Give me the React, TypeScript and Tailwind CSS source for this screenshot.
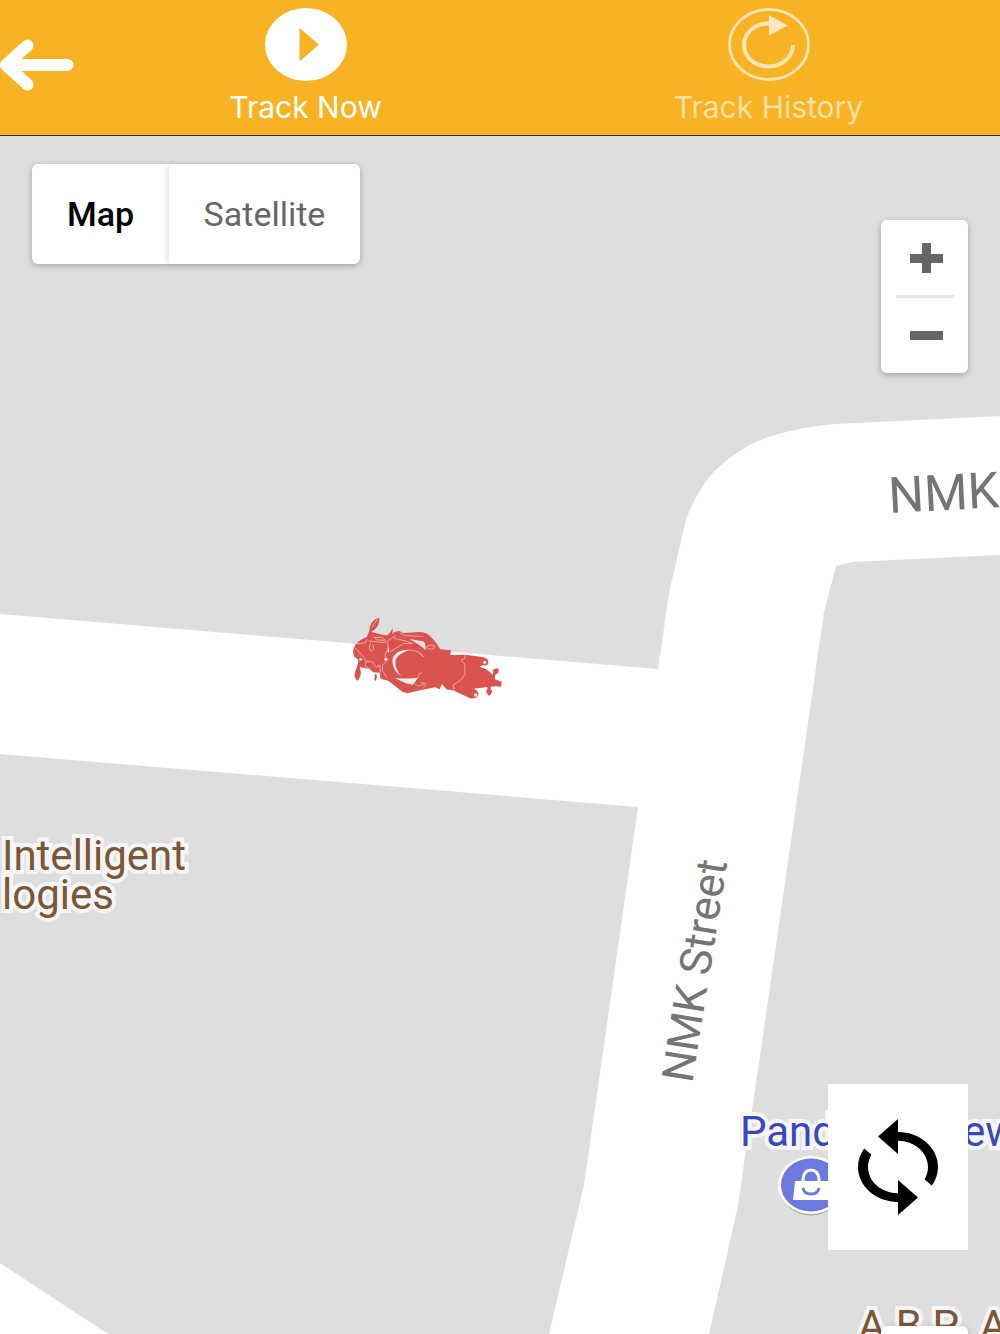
import React, { useState } from "react";

function BackArrow() {
  return (
    <svg viewBox="0 0 74 52" className="h-[52px] w-[74px]" fill="none" stroke="white" strokeWidth="12" strokeLinecap="round" strokeLinejoin="round" aria-hidden="true">
      <path d="M27.500 6.500 L6 26 L27.500 45.500 M10 26 H67.500" />
    </svg>
  );
}

function PlayIcon() {
  return (
    <svg viewBox="0 0 82 73" className="h-[73px] w-[82px]" aria-hidden="true">
      <ellipse cx="41" cy="36.500" rx="41" ry="36.500" fill="white" />
      <path d="M34.500 20 L54 36.500 L34.500 53.500 Z" fill="#f7b323" />
    </svg>
  );
}

function HistoryIcon() {
  return (
    <svg viewBox="0 0 82 73" className="h-[73px] w-[82px]" aria-hidden="true">
      <ellipse cx="41" cy="36.500" rx="39.500" ry="35" fill="none" stroke="#fde4b3" strokeWidth="2.800" />
      <path d="M65 37 A24.500 21.500 0 1 1 41 15.500" fill="none" stroke="#fde4b3" strokeWidth="4" />
      <path d="M41 7 L59.500 17.500 L41 27.500 Z" fill="#fde8bf" />
    </svg>
  );
}

function LoopIcon() {
  return (
    <svg viewBox="4 1 16 22" preserveAspectRatio="none" className="h-24 w-20" aria-hidden="true">
      <path d="M12 4V1L8 5l4 4V6c3.310 0 6 2.690 6 6 0 1.010-.25 1.970-.7 2.800l1.460 1.460C19.540 15.030 20 13.570 20 12c0-4.420-3.580-8-8-8zm0 14c-3.310 0-6-2.690-6-6 0-1.010.25-1.970.7-2.800L5.240 7.740C4.460 8.970 4 10.430 4 12c0 4.420 3.580 8 8 8v3l4-4-4-4v3z" fill="black" />
    </svg>
  );
}

function Roads() {
  return (
    <svg viewBox="0 136 1000 1198" preserveAspectRatio="xMinYMin slice" className="absolute inset-0 h-full w-full" fill="white" aria-hidden="true">
      <path d="M0 614 L658 669 L669 594 Q674 570 686 520 Q691 503 709 477 Q724 460 748 446 Q780 429 835 424 L1000 416 V555 L852 562 L836 566 L824 612 L758 1070 L746 1149 L738 1206 L709 1334 H549 L584 1185 L638 807 L0 754 Z" />
      <path d="M0 1263 L108 1334 H0 Z" />
    </svg>
  );
}

function Motorbike() {
  return (
    <svg viewBox="0 0 510 285" className="absolute left-[340px] top-[474px] h-[95px] w-[170px]" role="img" aria-label="Vehicle position">
      <g fill="#d9534f">
        <path d="M39 125 Q41 103 62 90 L84 79 L95 66 L127 74 L150 78 L164 66 L178 63 L190 69 L240 66 Q262 66 276 84 Q288 96 301 118 L333 121 L331 135 L375 134 L432 142 Q447 148 445 161 Q438 170 430 165 L418 170 Q442 176 458 194 L460 188 L457 182 Q466 174 474 175 Q480 186 470 192 L465 196 L465 208 L485 215 L483 230 L467 229 L452 230 L452 238 L457 242 Q455 252 447 258 Q439 250 438 243 L442 238 L442 231 L401 236 Q418 242 415 256 Q407 268 390 265 L342 242 L319 238 L306 222 L299 238 L285 232 L240 241 L202 250 L188 246 L145 212 L122 206 L119 188 L100 187 L86 176 L62 172 L53 148 L42 139 Z" />
        <path d="M88 63 Q88 40 106 28 L118 23 Q120 50 97 63 L88 82 L80 92 L77 89 Z" />
        <path d="M57 149 L65 153 L60 176 Q68 194 52 213 Q37 198 49 176 Z" />
        <path d="M105 190 L111 197 L108 213 L103 210 Z" />
        <path d="M140 78 L152 65 L158 54 L158 67 L154 79 Z" />
      </g>
      <path d="M208 87 L250 94 Q258 100 257 122 Q247 108 208 87 Z" fill="#e4dede" />
      <g fill="#f7efee">
        <path d="M164 204 Q190 208 234 203 L219 224 L198 220 Z" />
        <path d="M211 119 Q163 117 157 151 Q157 183 185 199 Q164 178 166 153 Q169 132 211 119 Z" />
        <circle cx="138" cy="148" r="5" />
        <ellipse cx="145" cy="120" rx="3" ry="8" />
        <circle cx="62" cy="148" r="4" />
        <circle cx="434" cy="157" r="5" />
        <circle cx="407" cy="255" r="5" />
      </g>
      <g fill="none" stroke="#f0b3af" strokeWidth="2.500" strokeLinecap="round" strokeLinejoin="round">
        <path d="M44 102 L77 98 L80 89 M87 93 L135 98 L153 86 L166 78 M101 82 L127 83 L136 91 L110 90 L104 82" />
        <path d="M45 113 L65 134 L79 154 L98 156 L109 172 L119 165 L121 186 M78 154 L76 169 L95 180" />
        <path d="M91 101 Q83 117 94 124 L101 115 L99 105 M112 28 L96 51" />
        <path d="M143 98 L145 115 L135 133 L140 155 L128 164 L127 181 L139 202" />
        <path d="M151 125 L192 100 L219 101 L201 94 L162 85 M211 120 Q237 121 250 140 M180 69 L195 77 L249 79" />
        <path d="M233 205 L237 192 L246 188 M225 222 L236 229 L252 222" />
        <path d="M261 109 L270 105 L283 107 L284 113 L274 118 L263 115 Z M240 132 L250 139" />
        <path d="M376 134 L374 145 L363 151 L374 161 L375 191 L365 208 L339 226 L343 242" />
        <path d="M242 218 L254 219 L258 226 L251 232" />
      </g>
    </svg>
  );
}

function ShopPin() {
  return (
    <svg viewBox="0 0 66 60" className="absolute left-[778px] top-[1020px] h-[60px] w-[66px]" role="img" aria-label="Shop">
      <ellipse cx="33" cy="31" rx="31" ry="28.500" fill="#b7a59c" />
      <ellipse cx="33" cy="29" rx="33" ry="29" fill="white" />
      <ellipse cx="33" cy="29" rx="30" ry="26.500" fill="#6c7ae0" />
      <path d="M17 25 H50 L51 44 H15 Z" fill="white" />
      <path d="M25 27 V23 Q26 14 33 14 Q40 14 41 23 V27" fill="none" stroke="white" strokeWidth="3" />
      <path d="M25 32 Q26 38 33 38 Q40 38 41 32" fill="none" stroke="#6c7ae0" strokeWidth="3" />
    </svg>
  );
}

const halo = "absolute whitespace-nowrap text-[42px] leading-[39px] [-webkit-text-stroke:8px_#f5f5f5] [paint-order:stroke_fill]";

export default function App() {
  const [tab, setTab] = useState("now");
  const tabClass = "flex flex-1 flex-col items-center pt-2 font-[Inter,sans-serif] text-[30px] leading-9";
  return (
    <div className="flex min-h-screen flex-col overflow-hidden bg-[#dedede] font-[Roboto,sans-serif]">
      <header className="flex h-[136px] shrink-0 border-b border-[#3a2c12] bg-[#f7b323]">
        <button type="button" aria-label="Back" className="flex shrink-0 items-center pb-1.5">
          <BackArrow />
        </button>
        <nav className="flex flex-1">
          <button type="button" aria-pressed={tab === "now"} onClick={() => setTab("now")} className={`${tabClass} text-white`}>
            <PlayIcon />
            <span className="mt-2">Track Now</span>
          </button>
          <button type="button" aria-pressed={tab === "history"} onClick={() => setTab("history")} className={`${tabClass} text-[#fde0a7]`}>
            <HistoryIcon />
            <span className="mt-2">Track History</span>
          </button>
        </nav>
      </header>

      <main className="relative flex-1 overflow-hidden">
        <Roads />

        <span className="absolute left-[890px] top-[330px] origin-bottom-left -rotate-3 whitespace-nowrap text-[50px] leading-[60px] text-[#757575]">NMK Street</span>
        <span className="absolute left-[707px] top-[890px] origin-bottom-left -rotate-[81deg] whitespace-nowrap text-[44px] leading-[60px] text-[#757575]">NMK Street</span>
        <span className={`${halo} left-0.5 top-[700px] text-[#7b5737]`}>
          Intelligent
          <br />
          logies
        </span>
        <span className={`${halo} left-[740px] top-[976px] text-[#3b47be]`}>Pand</span>
        <span className={`${halo} left-[963px] top-[976px] text-[#3b47be]`}>ew</span>
        <span className={`${halo} left-[858px] top-[1170px] text-[#7b5737]`}>A B P&nbsp; A</span>
        <ShopPin />
        <Motorbike />

        <div className="absolute left-8 top-7 flex h-[100px] rounded-md bg-white text-[34px] shadow-[0_2px_6px_rgba(0,0,0,0.25)]">
          <button type="button" className="w-[137px] font-medium text-black">Map</button>
          <button type="button" className="w-[191px] rounded-r-md text-[#666] shadow-[-4px_0_6px_-2px_rgba(0,0,0,0.12)]">Satellite</button>
        </div>

        <div className="absolute right-8 top-[84px] flex w-[87px] flex-col items-center rounded-md bg-white shadow-[0_2px_6px_rgba(0,0,0,0.28)]">
          <button type="button" aria-label="Zoom in" className="flex h-[75px] w-full items-center justify-center">
            <svg viewBox="0 0 33 30" className="ml-1 h-[30px] w-[33px]" fill="#666" aria-hidden="true"><path d="M12 0h9v11h12v9H21v10h-9V20H0v-9h12z" /></svg>
          </button>
          <div className="h-[3px] w-[58px] bg-[#e6e6e6]" />
          <button type="button" aria-label="Zoom out" className="flex h-[75px] w-full items-center justify-center">
            <svg viewBox="0 0 33 9" className="ml-1 h-[9px] w-[33px]" fill="#666" aria-hidden="true"><path d="M0 0h33v9H0z" /></svg>
          </button>
        </div>

        <button type="button" aria-label="Refresh" className="absolute bottom-[84px] right-8 flex h-[166px] w-[140px] items-center justify-center bg-white">
          <LoopIcon />
        </button>
        <div className="absolute -bottom-20 right-8 h-[88px] w-[87px] rounded-md bg-white shadow-[0_2px_6px_rgba(0,0,0,0.28)]" />
      </main>
    </div>
  );
}
